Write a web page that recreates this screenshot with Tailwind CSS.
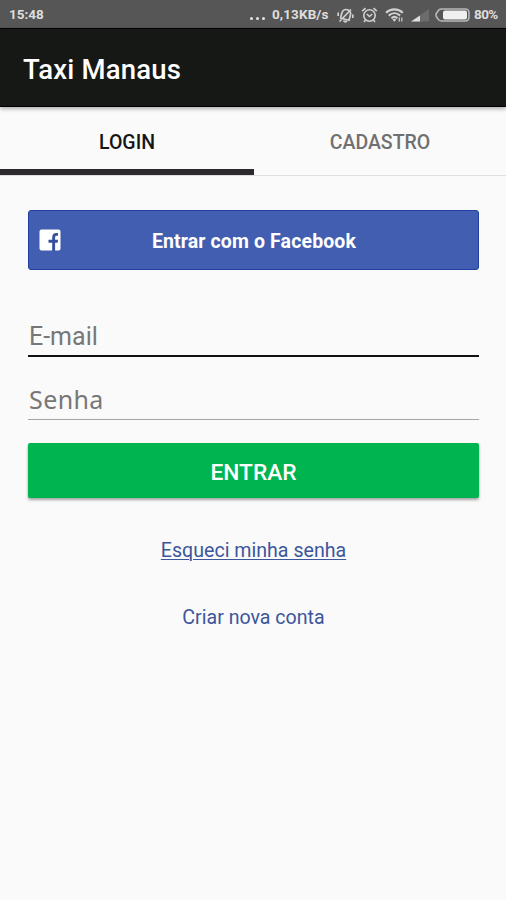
<!DOCTYPE html>
<html lang="pt-BR">
<head>
<meta charset="utf-8">
<title>Taxi Manaus</title>
<script src="https://cdn.jsdelivr.net/npm/@tailwindcss/browser@4"></script>
</head>
<body class="w-[506px] h-[900px] overflow-hidden bg-[#fafafa] font-['Roboto',sans-serif]">
<div class="flex h-[28px] items-center bg-[#565656] pl-[9px] pt-[2px] text-[13.5px] font-bold leading-none text-[#dedede]">
  <span class="w-[241px]">15:48</span>
  <span class="flex w-[22px] gap-[3px] pt-[6px]"><i class="size-[3px] rounded-full bg-[#e4e4e4]"></i><i class="size-[3px] rounded-full bg-[#e4e4e4]"></i><i class="size-[3px] rounded-full bg-[#e4e4e4]"></i></span>
  <span class="w-[65px] whitespace-nowrap tracking-[0.1px]">0,13KB/s</span>
  <svg class="mr-[7px] h-[17px] w-[17px] shrink-0" viewBox="0 0 17 17" fill="none" stroke="#d0d0d0" stroke-width="1.700"><path d="M3.500 11 5 5.500C6 3 8 2 10.500 2.800S14 6 13.300 8.500L12 13.300 3 11zM6.500 13.500q1.500 2 3.500.8M2.500 14.500 14 2.500M1.200 5.500v3.500M15.800 7.500v3.500"/></svg>
  <svg class="mr-[7px] h-[17px] w-[17px] shrink-0" viewBox="0 0 17 17" fill="none" stroke="#d0d0d0" stroke-width="1.600"><circle cx="8.500" cy="8.500" r="5.700"/><path d="M1.200 4.200 4.500 1.200M15.800 4.200l-3.300-3M5.800 7l2.700 2.500L11.200 7M4.500 13l-1.500 2M12.500 13l1.500 2"/></svg>
  <svg class="mr-[7px] h-[15px] w-[19px] shrink-0" viewBox="0 0 19 15" fill="none" stroke="#d0d0d0" stroke-width="2.100"><path d="M1 4.800c4.800-4.600 12-4.600 16.800 0M3.700 7.600c3.400-3.100 8-3.100 11.400 0M6.400 10.300c1.900-1.700 4.200-1.700 6 0"/><path d="m9.400 13.800-2-2.300c1.200-1 2.700-1 3.900 0z" fill="#d0d0d0" stroke="none"/><path d="M14.300 9.500v4M16.800 9.500v4" stroke-width="1.200"/></svg>
  <svg class="mr-[6px] h-[13px] w-[18px] shrink-0" viewBox="0 0 18 13"><path d="M0 12.500 18 0v12.500z" fill="#6c6c6c"/><path d="M0 12.500 9 6.500v6z" fill="#dedede"/></svg>
  <svg class="mr-[4px] h-[14px] w-[35px] shrink-0" viewBox="0 0 35 14"><path d="M6.500 1H30q4 0 4 4v4q0 4-4 4H6.500Q4 13 3 11L1 8V6l2-3q1-2 3.500-2z" fill="none" stroke="#b8b8b8" stroke-width="1.600"/><rect x="8" y="2.500" width="24" height="9" rx="2" fill="#f0f0f0"/></svg>
  <span class="tracking-[-0.6px]">80%</span>
</div>
<header class="relative flex h-[79px] items-center border-y border-black bg-[#161815] pl-[23px] pt-[5px] shadow-[0_2px_4px_rgba(0,0,0,0.3)]">
  <h1 class="text-[27.5px] font-medium leading-none tracking-[0.2px] text-white">Taxi Manaus</h1>
</header>
<nav class="flex h-[69px] border-b border-[#dedede] text-[19.5px] leading-none">
  <div class="flex w-[254px] items-center justify-center border-b-[6px] border-[#2c2a2c] pt-[9px] font-medium text-[#151515]">LOGIN</div>
  <div class="flex flex-1 items-center justify-center pt-[3px] font-medium text-[#707070]">CADASTRO</div>
</nav>
<main class="pl-[28px] pr-[27px] pt-[34px]">
  <button class="flex h-[60px] w-full items-center rounded-[3px] border border-[#1e3fa0] bg-[#425eb0] pl-[10px] text-[19.5px] font-bold leading-none text-white">
    <svg class="h-[22px] w-[22px]" viewBox="0 0 22 22"><rect x=".5" y=".5" width="21" height="21" rx="2" fill="#fff"/><path d="M13.200 22v-8.300h-3.700v-3h3.700V8.300c0-3.500 2-4.800 5.800-4.300v2.900c-2.300-.2-2.900.2-2.900 1.800v2h3l-.5 3h-2.500V22z" fill="#34519f"/></svg>
    <span class="flex-1 pr-[31px] pt-[3px] text-center tracking-[0.13px]">Entrar com o Facebook</span>
  </button>
  <label class="mt-[48px] flex h-[39px] items-center border-b-2 border-[#111] pl-[1px] text-[25px] leading-none text-[#777]">E-mail</label>
  <label class="flex h-[63px] items-center border-b border-[#a5a5a5] pl-[1px] pt-[23px] font-['Noto_Sans',sans-serif] text-[25px] leading-none tracking-[0.4px] text-[#777]">Senha</label>
  <button class="mt-[23px] flex h-[55px] w-full items-center justify-center rounded-[2px] bg-[#00b550] pt-[5px] text-[22.7px] font-medium leading-none text-white shadow-[0_2px_3px_rgba(0,0,0,0.35)]">ENTRAR</button>
  <div class="mt-[42px] flex flex-col items-center gap-[46px] text-[19.6px] leading-[21px] text-[#3c569c]">
    <a class="underline decoration-1 underline-offset-2">Esqueci minha senha</a>
    <a>Criar nova conta</a>
  </div>
</main>
</body>
</html>
